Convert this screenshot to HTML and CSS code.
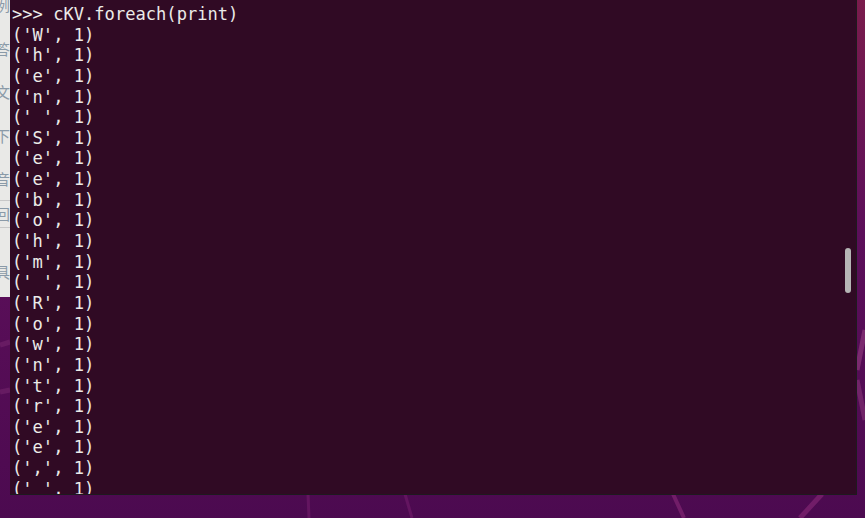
FILE: index.html
```html
<!DOCTYPE html>
<html lang="en">
<head>
    <meta charset="UTF-8">
    <meta name="viewport" content="width=device-width, initial-scale=1.0">
    <title>Terminal</title>
    <link rel="stylesheet" href="styles.css">
</head>
<body>
    <div class="desktop">
        <svg class="wallpaper" width="865" height="518" viewBox="0 0 865 518">
            <line x1="673" y1="494" x2="684" y2="518" stroke="#8a2a78" stroke-width="4" opacity="0.6"/>
            <line x1="822" y1="494" x2="800" y2="518" stroke="#8a2a78" stroke-width="5" opacity="0.6"/>
            <line x1="308" y1="494" x2="309" y2="518" stroke="#7a2070" stroke-width="3" opacity="0.5"/>
            <line x1="405" y1="494" x2="412" y2="518" stroke="#7a2070" stroke-width="3" opacity="0.5"/>
            <line x1="865" y1="330" x2="857" y2="370" stroke="#a04888" stroke-width="5" opacity="0.5"/>
            <line x1="857" y1="380" x2="865" y2="420" stroke="#a04888" stroke-width="5" opacity="0.4"/>
            <line x1="0" y1="345" x2="10" y2="342" stroke="#7a2a70" stroke-width="5" opacity="0.5"/>
            <line x1="0" y1="392" x2="10" y2="390" stroke="#7a2a70" stroke-width="5" opacity="0.5"/>
        </svg>
        <div class="side-window">
            <div class="side-text">
                <span>例</span>
                <span>答</span>
                <span>文</span>
                <span>下</span>
                <span class="short">音</span>
                <span class="ruled">回</span>
                <span>具</span>
            </div>
        </div>
        <div class="terminal">
<pre class="output">&gt;&gt;&gt; cKV.foreach(print)
('W', 1)
('h', 1)
('e', 1)
('n', 1)
(' ', 1)
('S', 1)
('e', 1)
('e', 1)
('b', 1)
('o', 1)
('h', 1)
('m', 1)
(' ', 1)
('R', 1)
('o', 1)
('w', 1)
('n', 1)
('t', 1)
('r', 1)
('e', 1)
('e', 1)
(',', 1)
(' ', 1)</pre>
            <div class="scrollbar"></div>
        </div>
    </div>
</body>
</html>
```

FILE: styles.css
```css
html, body {
    margin: 0;
    padding: 0;
}
body {
    width: 865px;
    height: 518px;
    overflow: hidden;
    background: linear-gradient(180deg, #7a1c4c 0%, #5c0f5a 45%, #4c0a50 100%);
}
.desktop {
    position: relative;
    display: flex;
    align-items: flex-start;
    height: 518px;
}
.wallpaper {
    position: absolute;
    left: 0;
    top: 0;
}
.side-window {
    position: relative;
    width: 10px;
    height: 297px;
    background: #e9e9e7;
    overflow: hidden;
    flex: none;
}
.side-text {
    display: flex;
    flex-direction: column;
    margin-left: -5px;
    margin-top: -5px;
    font-family: "Noto Sans CJK SC", sans-serif;
    font-size: 15px;
    color: #8a9aa8;
}
.side-text span {
    height: 43.5px;
    line-height: 20px;
    flex: none;
}
.side-text .short {
    height: 31px;
}
.side-text .ruled {
    border-top: 1px solid #c8c8c8;
    border-bottom: 1px solid #c8c8c8;
    height: 26px;
    line-height: 26px;
    margin-bottom: 34px;
}
.terminal {
    position: relative;
    width: 846px;
    height: 494px;
    background: #300a24;
    border-right: 1px solid #1e1a1e;
    border-bottom: 1px solid #1e1a1e;
    overflow: hidden;
    flex: none;
}
.output {
    margin: 0;
    padding: 4px 0 0 2px;
    font-family: "DejaVu Sans Mono", monospace;
    font-size: 17.1px;
    line-height: 20.64px;
    color: #ebebe8;
}
.scrollbar {
    position: absolute;
    left: 835px;
    top: 248px;
    width: 6px;
    height: 45px;
    border-radius: 3px;
    background: #b5b5b5;
}
```
